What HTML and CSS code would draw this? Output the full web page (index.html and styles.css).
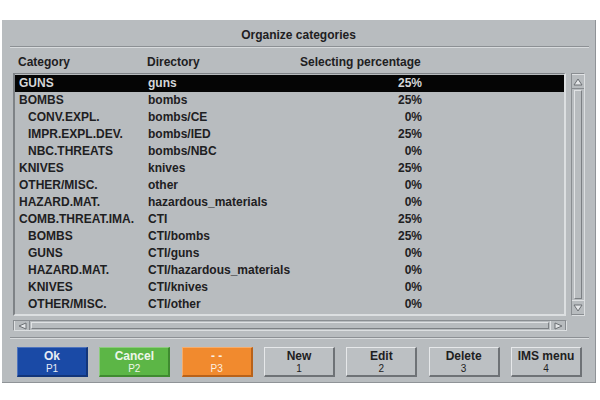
FILE: index.html
```html
<!DOCTYPE html>
<html lang="en">
<head>
    <meta charset="UTF-8">
    <title>Organize categories</title>
    <link rel="stylesheet" href="styles.css">
</head>
<body>

    <div class="window">
        <div class="title">Organize categories</div>
        <div class="separator"></div>

        <div class="content">
            <div class="col-head">
                <span>Category</span>
                <span>Directory</span>
                <span>Selecting percentage</span>
            </div>

            <div class="list-area">
                <div class="listbox">
                    <div class="row selected"><span>GUNS</span><span>guns</span><span class="pct">25%</span></div>
                    <div class="row"><span>BOMBS</span><span>bombs</span><span class="pct">25%</span></div>
                    <div class="row sub"><span>CONV.EXPL.</span><span>bombs/CE</span><span class="pct">0%</span></div>
                    <div class="row sub"><span>IMPR.EXPL.DEV.</span><span>bombs/IED</span><span class="pct">25%</span></div>
                    <div class="row sub"><span>NBC.THREATS</span><span>bombs/NBC</span><span class="pct">0%</span></div>
                    <div class="row"><span>KNIVES</span><span>knives</span><span class="pct">25%</span></div>
                    <div class="row"><span>OTHER/MISC.</span><span>other</span><span class="pct">0%</span></div>
                    <div class="row"><span>HAZARD.MAT.</span><span>hazardous_materials</span><span class="pct">0%</span></div>
                    <div class="row"><span>COMB.THREAT.IMA.</span><span>CTI</span><span class="pct">25%</span></div>
                    <div class="row sub"><span>BOMBS</span><span>CTI/bombs</span><span class="pct">25%</span></div>
                    <div class="row sub"><span>GUNS</span><span>CTI/guns</span><span class="pct">0%</span></div>
                    <div class="row sub"><span>HAZARD.MAT.</span><span>CTI/hazardous_materials</span><span class="pct">0%</span></div>
                    <div class="row sub"><span>KNIVES</span><span>CTI/knives</span><span class="pct">0%</span></div>
                    <div class="row sub"><span>OTHER/MISC.</span><span>CTI/other</span><span class="pct">0%</span></div>
                </div>

                <!-- vertical scrollbar -->
                <div class="vscroll">
                    <div class="arrow">
                        <svg width="10" height="8" viewBox="0 0 10 8"><polygon points="5,1 9,7 1,7" fill="#e4e6e8" stroke="#6c7074" stroke-width="1"/></svg>
                    </div>
                    <div class="thumb-v"></div>
                    <div class="arrow">
                        <svg width="10" height="8" viewBox="0 0 10 8"><polygon points="1,1 9,1 5,7" fill="#e4e6e8" stroke="#6c7074" stroke-width="1"/></svg>
                    </div>
                </div>
            </div>

            <!-- horizontal scrollbar -->
            <div class="hscroll">
                <div class="arrow">
                    <svg width="9" height="8" viewBox="0 0 9 8"><polygon points="1,4 8,1 8,7" fill="#e4e6e8" stroke="#6c7074" stroke-width="1"/></svg>
                </div>
                <div class="thumb-h"></div>
                <div class="arrow">
                    <svg width="9" height="8" viewBox="0 0 9 8"><polygon points="1,1 8,4 1,7" fill="#e4e6e8" stroke="#6c7074" stroke-width="1"/></svg>
                </div>
            </div>

            <div class="separator"></div>

            <div class="buttons">
                <div class="btn blue">Ok<small>P1</small></div>
                <div class="btn green">Cancel<small>P2</small></div>
                <div class="btn orange">- -<small>P3</small></div>
                <div class="btn">New<small>1</small></div>
                <div class="btn">Edit<small>2</small></div>
                <div class="btn">Delete<small>3</small></div>
                <div class="btn">IMS menu<small>4</small></div>
            </div>
        </div>
    </div>

</body>
</html>
```
FILE: styles.css
```css
body {
    margin: 0;
    background-color: #ffffff;
    font-family: "Liberation Sans", Arial, sans-serif;
    font-size: 12px;
    font-weight: bold;
    color: #1e2022;
}

.window {
    margin: 20px 0 0 2px;
    width: 594px;
    height: 363px;
    box-sizing: border-box;
    background-color: #b8bcbf;
    border-right: 1px solid #8f9397;
    border-bottom: 1px solid #8f9397;
}

.title {
    height: 26px;
    line-height: 30px;
    text-align: center;
}

/* etched line: dark over light */
.separator {
    height: 0;
    margin: 0 6px 0 8px;
    border-top: 1px solid #8c9094;
    border-bottom: 1px solid #d8dbdd;
}

.content {
    padding: 0 10px 0 11px;
}

.content .separator {
    margin: 6px -4px 0 -3px;
}

.col-head,
.row {
    display: grid;
    grid-template-columns: 129px 153px 121px;
}

.col-head {
    padding: 8px 0 4px 5px;
    line-height: 13px;
    white-space: nowrap;
}

.list-area {
    display: flex;
    gap: 5px;
    height: 243px;
}

.listbox {
    flex: 1;
    box-sizing: border-box;
    padding-top: 1px;
    border-top: 1px solid #7e8286;
    border-left: 2px solid #7e8286;
    border-right: 2px solid #dcdfe1;
    border-bottom: 2px solid #dcdfe1;
}

.row {
    height: 17px;
    line-height: 17px;
    padding-left: 4px;
    white-space: nowrap;
}

.row.sub span:first-child {
    padding-left: 9px;
}

.row .pct {
    text-align: right;
}

.row.selected {
    background-color: #050505;
    color: #d4d6d8;
}

.vscroll {
    width: 14px;
    box-sizing: border-box;
    display: flex;
    flex-direction: column;
    border: 1px solid #8a8e92;
    border-right-color: #dcdfe1;
    border-bottom-color: #dcdfe1;
}

.vscroll .arrow {
    height: 13px;
    display: flex;
    justify-content: center;
    align-items: center;
    border-top: 1px solid #e0e2e4;
    border-bottom: 1px solid #888c90;
}

.thumb-v {
    flex: 1;
    margin: 1px 2px;
    border-left: 1px solid #e0e2e4;
    border-right: 1px solid #7c8084;
    border-top: 1px solid #e0e2e4;
    border-bottom: 1px solid #7c8084;
}

.hscroll {
    display: flex;
    height: 11px;
    width: 554px;
    margin-top: 4px;
    box-sizing: border-box;
    border: 1px solid #8a8e92;
    border-right-color: #dcdfe1;
    border-bottom-color: #dcdfe1;
}

.hscroll .arrow {
    width: 14px;
    display: flex;
    justify-content: center;
    align-items: center;
    border-left: 1px solid #e0e2e4;
    border-right: 1px solid #888c90;
}

.thumb-h {
    flex: 1;
    margin: 1px 1px;
    border-top: 1px solid #e0e2e4;
    border-bottom: 1px solid #7c8084;
    border-left: 1px solid #e0e2e4;
    border-right: 1px solid #7c8084;
}

.buttons {
    display: flex;
    justify-content: space-between;
    margin-top: 8px;
    padding: 0 3px 0 4px;
}

.btn {
    width: 71px;
    height: 30px;
    box-sizing: border-box;
    display: flex;
    flex-direction: column;
    align-items: center;
    justify-content: center;
    line-height: 13px;
    background-color: #bcc0c3;
    border-top: 1px solid #e6e8ea;
    border-left: 1px solid #e6e8ea;
    border-right: 2px solid #6e7276;
    border-bottom: 2px solid #6e7276;
}

.btn small {
    font-size: 10px;
    font-weight: normal;
    line-height: 11px;
}

.btn.blue {
    background-color: #1a4aa6;
    color: #e8ecf4;
    border-color: #4f74bd #12357a #12357a #4f74bd;
}

.btn.green {
    background-color: #5cb646;
    color: #eef6ea;
    border-color: #8ccc7c #3f8a30 #3f8a30 #8ccc7c;
}

.btn.orange {
    background-color: #f18a2e;
    color: #fcefe2;
    border-color: #f6ad6c #b8621a #b8621a #f6ad6c;
}
```
